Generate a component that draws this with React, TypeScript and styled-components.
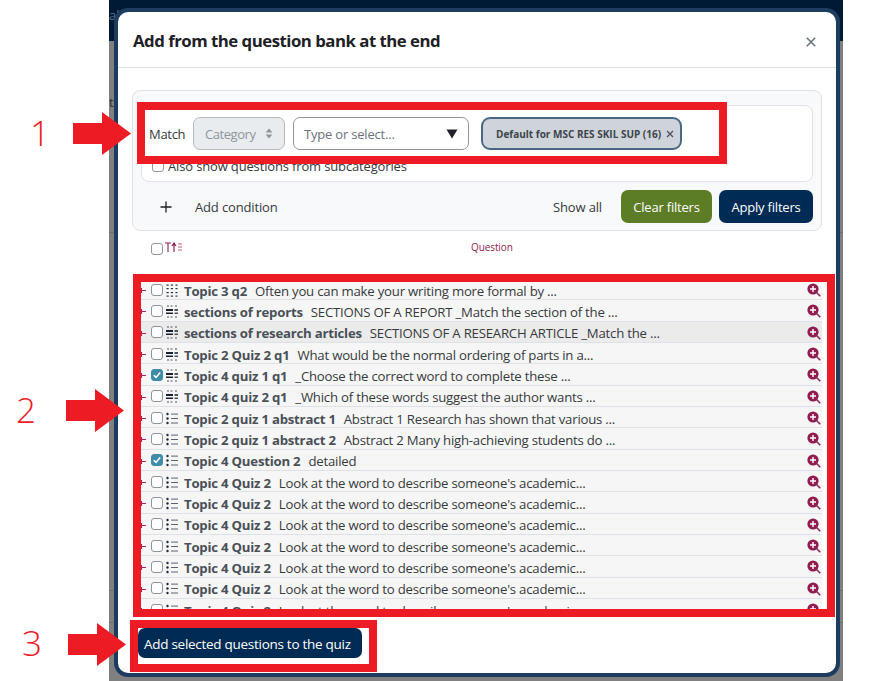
import * as React from 'react';
import styled, { createGlobalStyle } from 'styled-components';

const GlobalStyle = createGlobalStyle`
  html, body {
    margin: 0;
    padding: 0;
    background: #fff;
  }
  body {
    font-family: "Open Sans", "Noto Sans", "Liberation Sans", sans-serif;
    color: #343a40;
  }
  * {
    box-sizing: border-box;
  }
`;

const Page = styled.div`
  position: relative;
  width: 874px;
  height: 681px;
  overflow: hidden;
  background: #fff;
  padding-left: 109px;
`;

const Backdrop = styled.div`
  position: relative;
  width: 734px;
  height: 681px;
  padding: 8px 0 0 5px;
  background: #808080;
  overflow: hidden;
`;

const NavStrip = styled.div`
  position: absolute;
  top: 0;
  left: 0;
  right: 0;
  height: 41px;
  background: #001a35;
  color: #5d7590;
  font-size: 13px;
  padding-top: 6px;
`;

const PageLine = styled.div<{ $top: number }>`
  position: absolute;
  left: 0;
  right: 0;
  top: ${p => p.$top}px;
  height: 1px;
  background: #6f6f6f;
`;

const PageWord = styled.div`
  position: absolute;
  left: 0;
  top: 93px;
  font-size: 13px;
  color: #2c2c2c;
`;

const Modal = styled.div`
  position: relative;
  display: flex;
  flex-direction: column;
  width: 726px;
  height: 669px;
  background: #fff;
  border: 4px solid #1d3d5f;
  border-radius: 14px;
  overflow: hidden;
`;

const ModalHeader = styled.div`
  display: flex;
  flex: none;
  align-items: center;
  justify-content: space-between;
  height: 56px;
  padding: 2px 20px 0 15px;
  border-bottom: 1px solid #dee2e6;
`;

const ModalTitle = styled.div`
  font-size: 16.8px;
  font-weight: 700;
  letter-spacing: -0.5px;
  color: #1d2125;
`;

const CloseIcon = styled.svg`
  display: block;
  margin-top: 2px;
`;

const ModalBody = styled.div`
  flex: 1;
  min-height: 0;
  padding: 22px 14px 0;
`;

const FilterPanel = styled.div`
  height: 141px;
  padding: 14px 8px 0;
  background: #f8f9fa;
  border: 1px solid #dee2e6;
  border-radius: 8px;
`;

const ConditionBox = styled.div`
  height: 77px;
  padding: 11px 7px 0 7px;
  background: #fff;
  border: 1px solid #dee2e6;
  border-radius: 8px;
`;

const ConditionRow = styled.div`
  display: flex;
  align-items: center;
  height: 33px;
`;

const MatchLabel = styled.span`
  width: 44px;
  font-size: 13px;
  letter-spacing: -0.3px;
  color: #343a40;
`;

const CategorySelect = styled.div`
  display: flex;
  align-items: center;
  justify-content: space-between;
  width: 92px;
  height: 33px;
  padding: 0 11px 0 11px;
  margin-right: 8px;
  font-size: 13px;
  letter-spacing: -0.45px;
  color: #8d959c;
  background: #e9ecef;
  border: 1px solid #b3b9bf;
  border-radius: 7px;
`;

const TypeInput = styled.div`
  display: flex;
  align-items: center;
  justify-content: space-between;
  width: 176px;
  height: 33px;
  padding: 0 10px 0 10px;
  margin-right: 12px;
  font-size: 13px;
  letter-spacing: -0.2px;
  color: #6a737b;
  background: #fff;
  border: 1px solid #8f959e;
  border-radius: 7px;
`;

const Chip = styled.div`
  display: flex;
  align-items: center;
  justify-content: space-between;
  width: 201px;
  height: 33px;
  padding: 0 6px 0 13px;
  font-size: 10px;
  font-weight: 700;
  color: #3d444b;
  background: #ced4da;
  border: 2px solid #4a6785;
  border-radius: 9px;
`;

const SubcategoryRow = styled.label`
  display: flex;
  align-items: center;
  gap: 4px;
  margin: 7px 0 0 3px;
  font-size: 13px;
  letter-spacing: -0.15px;
  color: #343a40;
`;

const ActionRow = styled.div`
  display: flex;
  align-items: center;
  height: 33px;
  margin-top: 8px;
`;

const AddCondition = styled.div`
  display: flex;
  align-items: center;
  gap: 23px;
  flex: 1;
  padding: 1px 0 0 19px;
  font-size: 13px;
  letter-spacing: -0.15px;
  color: #343a40;
`;

const ShowAll = styled.span`
  margin-right: 19px;
  padding-top: 1px;
  font-size: 13px;
  letter-spacing: -0.15px;
  color: #343a40;
`;

const Button = styled.div<{ $variant: 'green' | 'navy' }>`
  display: flex;
  align-items: center;
  justify-content: center;
  height: 33px;
  padding-top: 1px;
  font-size: 13px;
  letter-spacing: -0.2px;
  color: #fff;
  border-radius: 7px;
  background: ${p => (p.$variant === 'green' ? '#5d7c26' : '#002b54')};
`;

const ClearButton = styled(Button)`
  width: 91px;
  margin-right: 7px;
`;

const ApplyButton = styled(Button)`
  width: 94px;
`;

const TableHead = styled.div`
  display: flex;
  align-items: center;
  height: 12px;
  margin: 12px 0 24px 19px;
`;

const SortIcon = styled.svg`
  display: block;
  margin: -4px 0 0 2px;
`;

const QuestionHeading = styled.span`
  margin: -4px 0 0 288px;
  font-size: 10px;
  letter-spacing: -0.1px;
  color: #8f1d50;
`;

const QuestionList = styled.div`
  width: 690px;
  height: 333px;
  margin-left: 9px;
  overflow: hidden;
`;

const Row = styled.div<{ $hover?: boolean }>`
  display: flex;
  align-items: center;
  width: 681px;
  height: 21.33px;
  padding-top: 3px;
  background: ${p => (p.$hover ? '#ebebeb' : '#f6f6f6')};
  border-bottom: 1px solid #dfe1e8;
`;

const RowTick = styled.span`
  position: relative;
  flex: none;
  width: 5px;
  height: 1px;
  margin-right: 5px;
  background: #b0215f;
  &::before {
    content: '';
    position: absolute;
    left: 0;
    top: -2px;
    width: 1px;
    height: 5px;
    background: #b0215f;
  }
`;

const Check = styled.span<{ $checked?: boolean }>`
  display: flex;
  flex: none;
  align-items: center;
  justify-content: center;
  width: 12px;
  height: 12px;
  border-radius: 3px;
  background: ${p => (p.$checked ? '#3f8ca8' : '#fff')};
  border: 1px solid ${p => (p.$checked ? '#3f8ca8' : '#8f959e')};
`;

const RowCheck = styled(Check)`
  margin: -2px 3px 0 0;
`;

const TypeIcon = styled.svg`
  display: block;
  flex: none;
  margin: -1px 6px 0 0;
`;

const RowTitle = styled.span`
  flex: none;
  font-size: 13.2px;
  font-weight: 700;
  letter-spacing: -0.22px;
  color: #495057;
  margin-right: 8px;
`;

const RowText = styled.span`
  flex: 1;
  font-size: 13.2px;
  letter-spacing: -0.22px;
  color: #373a3c;
  white-space: nowrap;
`;

const PreviewIcon = styled.svg`
  display: block;
  flex: none;
  margin: -1px 1px 0 0;
`;

const ModalFooter = styled.div`
  flex: none;
  height: 57px;
  padding: 12px 0 0 20px;
`;

const AddButton = styled(Button)`
  justify-content: flex-start;
  width: 224px;
  height: 30px;
  padding-left: 6px;
  font-size: 13.5px;
  letter-spacing: -0.28px;
`;

/* red marks drawn over the screenshot */
const RedFrame = styled.div<{ $x: number; $y: number; $w: number; $h: number }>`
  position: absolute;
  left: ${p => p.$x}px;
  top: ${p => p.$y}px;
  width: ${p => p.$w}px;
  height: ${p => p.$h}px;
  border: 8px solid #ed1c24;
`;

const RedNumber = styled.div<{ $x: number; $y: number }>`
  position: absolute;
  left: ${p => p.$x}px;
  top: ${p => p.$y}px;
  font-size: 35px;
  font-weight: 300;
  line-height: 44px;
  color: #ed1c24;
`;

const ArrowMark = styled.svg<{ $x: number; $y: number }>`
  position: absolute;
  left: ${p => p.$x}px;
  top: ${p => p.$y}px;
`;

const CheckMark = () => (
  <svg width="10" height="10" viewBox="0 0 10 10">
    <path d="M1.8 5.2 L4 7.4 L8.2 2.4" fill="none" stroke="#fff" strokeWidth="1.6" />
  </svg>
);

const MatchTypeIcon = () => (
  <TypeIcon width="12" height="13" viewBox="0 0 12 13">
    <g fill="#4b5563">
      <rect x="1" y="0.5" width="2" height="1" />
      <rect x="4.5" y="0.5" width="2" height="1" />
      <rect x="9" y="0.5" width="2" height="1" />
    </g>
    <rect x="0" y="4" width="7" height="2" fill="#16202e" />
    <rect x="8.5" y="4" width="3.5" height="2" fill="#4b5563" />
    <rect x="0" y="7.5" width="7" height="1.5" fill="#16202e" />
    <rect x="8.5" y="7.5" width="3.5" height="1.5" fill="#4b5563" />
    <g fill="#4b5563">
      <rect x="1" y="11.5" width="2" height="1" />
      <rect x="4.5" y="11.5" width="2" height="1" />
      <rect x="9" y="11.5" width="2" height="1" />
    </g>
  </TypeIcon>
);

const GapTypeIcon = () => (
  <TypeIcon width="12" height="13" viewBox="0 0 12 13">
    <g fill="#2a3442">
      {[0.5, 4, 8, 11.5].map(y => (
        <React.Fragment key={y}>
          <rect x="0.5" y={y} width="2.2" height="1.2" />
          <rect x="4.8" y={y} width="2.2" height="1.2" />
          <rect x="9.5" y={y} width="2" height="1.2" />
        </React.Fragment>
      ))}
    </g>
  </TypeIcon>
);

const ListTypeIcon = () => (
  <TypeIcon width="12" height="13" viewBox="0 0 12 13">
    <g fill="#1f2a3a">
      <circle cx="1.5" cy="2" r="1.2" />
      <circle cx="1.5" cy="6.5" r="1.2" />
      <circle cx="1.5" cy="11" r="1.2" />
    </g>
    <g fill="#5a6470">
      <rect x="5" y="1.6" width="7" height="1" />
      <rect x="5" y="6" width="7" height="1" />
      <rect x="5" y="10.5" width="7" height="1" />
    </g>
  </TypeIcon>
);

const Preview = () => (
  <PreviewIcon width="14" height="14" viewBox="0 0 14 14">
    <path d="M9 9 L13.3 13.3" stroke="#8f1d50" strokeWidth="1.5" fill="none" />
    <circle cx="6" cy="6" r="5.6" fill="#8f1d50" />
    <path d="M6 3 V9 M3 6 H9" stroke="#fff" strokeWidth="1.4" fill="none" />
  </PreviewIcon>
);

type Kind = 'gap' | 'match' | 'list';

const rows: { kind: Kind; title: string; text: string; checked?: boolean; hover?: boolean }[] = [
  { kind: 'gap', title: 'Topic 3 q2', text: 'Often you can make your writing more formal by ...' },
  { kind: 'match', title: 'sections of reports', text: 'SECTIONS OF A REPORT _Match the section of the ...' },
  { kind: 'match', title: 'sections of research articles', text: 'SECTIONS OF A RESEARCH ARTICLE _Match the ...', hover: true },
  { kind: 'match', title: 'Topic 2 Quiz 2 q1', text: 'What would be the normal ordering of parts in a...' },
  { kind: 'match', title: 'Topic 4 quiz 1 q1', text: '_Choose the correct word to complete these ...', checked: true },
  { kind: 'match', title: 'Topic 4 quiz 2 q1', text: '_Which of these words suggest the author wants ...' },
  { kind: 'list', title: 'Topic 2 quiz 1 abstract 1', text: 'Abstract 1 Research has shown that various ...' },
  { kind: 'list', title: 'Topic 2 quiz 1 abstract 2', text: 'Abstract 2 Many high-achieving students do ...' },
  { kind: 'list', title: 'Topic 4 Question 2', text: 'detailed', checked: true },
  ...Array.from({ length: 7 }, () => ({
    kind: 'list' as Kind,
    title: 'Topic 4 Quiz 2',
    text: "Look at the word to describe someone's academic...",
  })),
];

const typeIcons = { gap: GapTypeIcon, match: MatchTypeIcon, list: ListTypeIcon };

export default function App() {
  return (
    <Page>
      <GlobalStyle />
      <Backdrop>
        <NavStrip>al</NavStrip>
        <PageWord>ti</PageWord>
        <PageLine $top={232} />
        <PageLine $top={590} />
        <PageLine $top={622} />
        <Modal>
          <ModalHeader>
            <ModalTitle>Add from the question bank at the end</ModalTitle>
            <CloseIcon width="10" height="10" viewBox="0 0 10 10">
              <path d="M0.8 0.8 L9.2 9.2 M9.2 0.8 L0.8 9.2" stroke="#6a737b" strokeWidth="1.6" />
            </CloseIcon>
          </ModalHeader>
          <ModalBody>
            <FilterPanel>
              <ConditionBox>
                <ConditionRow>
                  <MatchLabel>Match</MatchLabel>
                  <CategorySelect>
                    Category
                    <svg width="8" height="11" viewBox="0 0 8 11">
                      <path d="M4 0.5 L7.4 4.5 H0.6 Z M4 10.5 L7.4 6.5 H0.6 Z" fill="#8d959c" />
                    </svg>
                  </CategorySelect>
                  <TypeInput>
                    Type or select...
                    <svg width="12" height="10" viewBox="0 0 12 10">
                      <path d="M0.5 0.5 H11.5 L6 9.5 Z" fill="#1d2125" />
                    </svg>
                  </TypeInput>
                  <Chip>
                    Default for MSC RES SKIL SUP (16)
                    <svg width="8" height="8" viewBox="0 0 8 8">
                      <path d="M1 1 L7 7 M7 1 L1 7" stroke="#4a5157" strokeWidth="1.3" />
                    </svg>
                  </Chip>
                </ConditionRow>
                <SubcategoryRow>
                  <Check />
                  Also show questions from subcategories
                </SubcategoryRow>
              </ConditionBox>
              <ActionRow>
                <AddCondition>
                  <svg width="12" height="12" viewBox="0 0 12 12">
                    <path d="M6 0.5 V11.5 M0.5 6 H11.5" stroke="#1d2125" strokeWidth="1.3" />
                  </svg>
                  Add condition
                </AddCondition>
                <ShowAll>Show all</ShowAll>
                <ClearButton $variant="green">Clear filters</ClearButton>
                <ApplyButton $variant="navy">Apply filters</ApplyButton>
              </ActionRow>
            </FilterPanel>
            <TableHead>
              <Check />
              <SortIcon width="18" height="11" viewBox="0 0 18 11">
                <path d="M0 1 H6 M3 1 V10" stroke="#8f1d50" strokeWidth="1.1" fill="none" />
                <path d="M9 10 V2 M7 4 L9 1 L11 4" stroke="#8f1d50" strokeWidth="1.2" fill="none" />
                <path d="M13 2 H17 M13 5 H17 M13 8 H17" stroke="#c9567f" strokeWidth="1.1" fill="none" />
              </SortIcon>
              <QuestionHeading>Question</QuestionHeading>
            </TableHead>
            <QuestionList>
              {rows.map((row, i) => {
                const Icon = typeIcons[row.kind];
                return (
                  <Row key={i} $hover={row.hover}>
                    <RowTick />
                    <RowCheck $checked={row.checked}>{row.checked && <CheckMark />}</RowCheck>
                    <Icon />
                    <RowTitle>{row.title}</RowTitle>
                    <RowText>{row.text}</RowText>
                    <Preview />
                  </Row>
                );
              })}
            </QuestionList>
          </ModalBody>
          <ModalFooter>
            <AddButton $variant="navy">Add selected questions to the quiz</AddButton>
          </ModalFooter>
        </Modal>
      </Backdrop>

      <RedFrame $x={137} $y={102} $w={590} $h={62} />
      <RedFrame $x={133} $y={274} $w={702} $h={343} />
      <RedFrame $x={130} $y={620} $w={247} $h={52} />

      <RedNumber $x={30} $y={111}>1</RedNumber>
      <RedNumber $x={16} $y={388}>2</RedNumber>
      <RedNumber $x={22} $y={621}>3</RedNumber>

      <ArrowMark $x={73} $y={112} width="58" height="43" viewBox="0 0 58 43">
        <path d="M0 11 H29 V0 L58 21.5 L29 43 V32 H0 Z" fill="#ed1c24" />
      </ArrowMark>
      <ArrowMark $x={66} $y={389} width="58" height="43" viewBox="0 0 58 43">
        <path d="M0 11 H29 V0 L58 21.5 L29 43 V32 H0 Z" fill="#ed1c24" />
      </ArrowMark>
      <ArrowMark $x={68} $y={623} width="58" height="43" viewBox="0 0 58 43">
        <path d="M0 11 H29 V0 L58 21.5 L29 43 V32 H0 Z" fill="#ed1c24" />
      </ArrowMark>
    </Page>
  );
}
